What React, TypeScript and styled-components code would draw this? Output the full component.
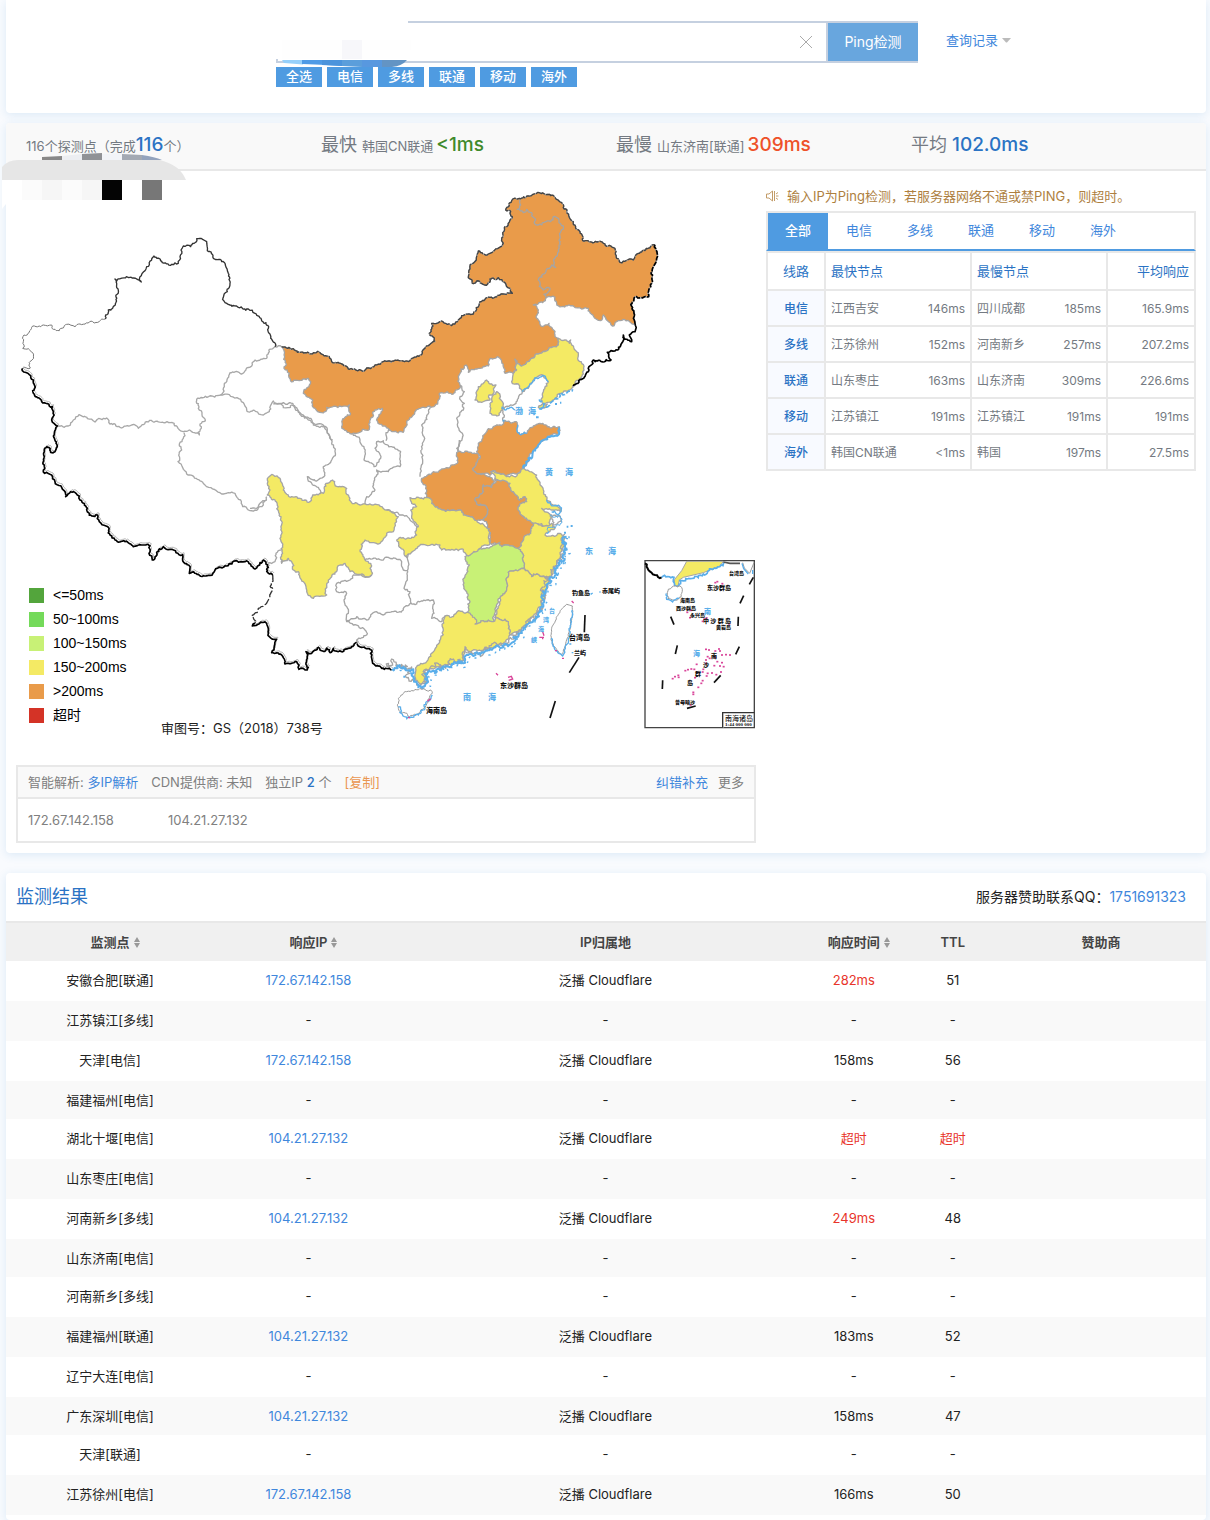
import React from 'react';
import styled, { createGlobalStyle, css } from 'styled-components';

const GlobalStyle = createGlobalStyle`
  * { box-sizing: border-box; }
  body {
    margin: 0;
    background: #f9fbfe;
    color: #222;
    font-family: Inter, "Noto Sans CJK SC", sans-serif;
    font-size: 13px;
    line-height: 20px;
  }
  a { color: #3f87dc; text-decoration: none; }
  button, input { font: inherit; }
  ul, h2, p { margin: 0; padding: 0; list-style: none; }
`;

const colors = {
  blue: '#4f9be1',
  deepBlue: '#2b73c4',
  line: '#e8e8e8',
  grey: '#747a82',
  red: '#e8342a',
};

/* ---------- layout ---------- */

const Page = styled.main`
  padding: 0 4px 0 6px;
  overflow: hidden;
`;

const Panel = styled.section<{ $gap?: number }>`
  position: relative;
  margin-top: ${(p) => p.$gap ?? 0}px;
  background: #fff;
  border-radius: 4px;
  box-shadow: 0 2px 10px rgba(40, 130, 200, 0.14);
`;

/* ---------- search ---------- */

const SearchPanel = styled(Panel)`
  padding: 21px 0 26px 270px;
  border-radius: 0 0 4px 4px;
`;

const SearchRow = styled.form`
  display: flex;
  align-items: center;
  gap: 28px;
`;

const SearchBox = styled.div`
  display: flex;
  width: 642px;
  height: 42px;
  border: solid #c5d0e0;
  border-width: 2px 0 2px 2px;
`;

const AddressInput = styled.input`
  flex: 1;
  min-width: 0;
  padding: 0 10px;
  border: 0;
  outline: 0;
  background: #fff;
`;

const ClearButton = styled.button`
  width: 40px;
  padding: 0;
  border: 0;
  background: #fff;
  svg { display: block; margin: 0 auto; }
`;

const PingButton = styled.button`
  width: 92px;
  padding: 0;
  border: 0;
  border-left: 2px solid #c5d0e0;
  background: #68a6de;
  color: #fff;
  font-size: 14px;
`;

const HistoryLink = styled.a`
  display: flex;
  align-items: center;
  gap: 4px;
  padding-bottom: 4px;
`;

const LineButtons = styled.div`
  display: flex;
  gap: 5px;
  margin-top: 4px;
`;

const LineButton = styled.button`
  width: 46px;
  height: 20px;
  padding: 0 0 2px;
  border: 0;
  background: ${colors.blue};
  color: #fff;
  font-weight: 500;
  line-height: 18px;
`;

const SearchSmudge = styled.svg`
  position: absolute;
  left: 264px;
  top: 16px;
  pointer-events: none;
`;

/* ---------- statistics ---------- */

const StatBar = styled.div`
  display: flex;
  height: 48px;
  padding-left: 20px;
  border-bottom: 2px solid ${colors.line};
  border-radius: 4px 4px 0 0;
  background: #f9f9f9;
  color: ${colors.grey};
`;

const Stat = styled.div`
  flex: 0 1 295px;
  white-space: nowrap;
  line-height: 44px;
`;

const StatLabel = styled.span`
  margin-right: 5px;
  font-size: 18px;
`;

const StatValue = styled.strong<{ $color: string; $gap?: number }>`
  margin-left: ${(p) => p.$gap ?? 0}px;
  color: ${(p) => p.$color};
  font-size: 19px;
  font-weight: 500;
`;

const StatSmudge = styled.svg`
  position: absolute;
  left: -4px;
  top: 30px;
  pointer-events: none;
`;

/* ---------- map column ---------- */

const Columns = styled.div`
  display: flex;
  align-items: flex-start;
  gap: 10px;
  padding: 0 10px 10px;
`;

const MapColumn = styled.div`
  flex: 1;
  min-width: 0;
`;

const MapArea = styled.div`
  position: relative;
`;

const MapDrawing = styled.svg`
  display: block;
  width: 100%;
  height: auto;
  font-family: "Noto Sans CJK SC", sans-serif;
`;

const Legend = styled.ul`
  position: absolute;
  left: 13px;
  bottom: 38px;
  color: #000;
  font-family: "Liberation Sans", "Noto Sans CJK SC", sans-serif;
  font-size: 14px;
  line-height: 24px;
`;

const LegendItem = styled.li<{ $color: string }>`
  display: flex;
  align-items: center;
  gap: 9px;
  height: 24px;
  &::before {
    content: '';
    width: 15px;
    height: 15px;
    background: ${(p) => p.$color};
  }
`;

const MapNote = styled.p`
  position: absolute;
  left: 145px;
  bottom: 27px;
`;

const ResolveBox = styled.div`
  border: 2px solid ${colors.line};
  color: #808080;
`;

const ResolveHead = styled.div`
  display: flex;
  height: 32px;
  padding: 0 10px;
  border-bottom: 2px solid ${colors.line};
  background: #f9f9f9;
  line-height: 30px;
  white-space: nowrap;
`;

const ResolveItem = styled.span`
  margin-right: 13px;
`;

const Count = styled.b`
  color: ${colors.deepBlue};
  font-weight: 500;
`;

const CopyLink = styled.a`
  color: #ea9650;
`;

const ResolveTools = styled.span`
  display: flex;
  gap: 10px;
  margin-left: auto;
`;

const AddressList = styled.ul`
  display: flex;
  padding: 0 10px;
  line-height: 42px;
  li { width: 140px; }
`;

/* ---------- summary column ---------- */

const SummaryColumn = styled.aside`
  flex: 0 0 430px;
  padding-top: 15px;
`;

const Notice = styled.p`
  display: flex;
  align-items: center;
  gap: 8px;
  height: 20px;
  margin-bottom: 5px;
  color: #ae7f3f;
`;

const Tabs = styled.div`
  display: flex;
  gap: 1px;
  height: 40px;
  border: solid ${colors.line};
  border-width: 2px 2px 0;
  border-bottom: 2px solid ${colors.blue};
`;

const Tab = styled.button<{ $active?: boolean }>`
  width: 60px;
  padding: 0 0 2px;
  border: 0;
  background: none;
  color: #3f87dc;
  ${(p) => p.$active && css`
    background: ${colors.blue};
    color: #fff;
    font-weight: 500;
  `}
`;

const SummaryTable = styled.table`
  width: 100%;
  table-layout: fixed;
  border-collapse: collapse;
  color: ${colors.grey};
  font-size: 12px;
  th, td {
    height: 36px;
    padding: 2px 5px 0;
    border: 2px solid ${colors.line};
    text-align: left;
    font-weight: 400;
  }
  th { color: ${colors.deepBlue}; }
  thead th { height: 38px; padding-top: 0; font-size: 13px; }
  th:first-child { text-align: center; }
  tbody th { background: #f8faff; font-weight: 500; }
  th:last-child, td:last-child { text-align: right; }
`;

const NodeCell = styled.div`
  display: flex;
  justify-content: space-between;
`;

/* ---------- result table ---------- */

const ResultHead = styled.header`
  display: flex;
  align-items: center;
  justify-content: space-between;
  height: 50px;
  padding: 0 20px 0 10px;
  border-bottom: 2px solid ${colors.line};
  font-size: 14px;
`;

const ResultTitle = styled.h2`
  color: ${colors.deepBlue};
  font-size: 18px;
  font-weight: 400;
`;

const ResultTable = styled.table`
  width: 100%;
  table-layout: fixed;
  border-spacing: 0;
  text-align: center;
  th, td { height: 40px; padding: 0; }
  td { padding-bottom: 2px; }
  thead th {
    height: 38px;
    background: #f0f0f0;
    color: #444;
    font-weight: 600;
  }
  tbody tr:nth-child(even) { background: #f9f9f9; }
  tbody tr:nth-child(4n) td { height: 38px; padding-bottom: 0; }
  th:first-child, td:first-child { padding-left: 10px; }
  th:last-child, td:last-child { padding-right: 0; }
`;

const ResultPanel = styled(Panel)`
  padding-bottom: 5px;
`;

const Value = styled.span<{ $bad?: boolean }>`
  color: ${(p) => (p.$bad ? colors.red : 'inherit')};
`;

const SortMark = styled.svg`
  margin: 0 -10px -1px 4px;
`;

/* ---------- map geometry ---------- */

type Point = [number, number];

const parse = (s: string): Point[] =>
  s.trim().split(/\s+/).map((p) => p.split(',').map(Number) as Point);

// Splits an edge into a crooked line; both directions of one edge give the same line.
function crooked(a: Point, b: Point, rough: number): Point[] {
  const dx = b[0] - a[0];
  const dy = b[1] - a[1];
  const len = Math.hypot(dx, dy);
  if (len < 7) return [b];
  const swap = a[0] > b[0] || (a[0] === b[0] && a[1] > b[1]);
  const seed = Math.sin((a[0] + b[0]) * 12.9898 + (a[1] + b[1]) * 78.233) * 43758.5453;
  const k = (seed - Math.floor(seed) - 0.5) * rough * Math.min(1, 14 / len) * (swap ? -1 : 1);
  const m: Point = [(a[0] + b[0]) / 2 - dy * k, (a[1] + b[1]) / 2 + dx * k];
  return [...crooked(a, m, rough), ...crooked(m, b, rough)];
}

function outline(s: string, close = false, rough = 0.6) {
  const pts = parse(s);
  if (close) pts.push(pts[0]);
  const out: Point[] = [pts[0]];
  for (let i = 1; i < pts.length; i += 1) out.push(...crooked(pts[i - 1], pts[i], rough));
  return `M${out.map((p) => `${p[0].toFixed(1)},${p[1].toFixed(1)}`).join('L')}${close ? 'Z' : ''}`;
}

const ORANGE = '#e99b4a';
const YELLOW = '#f4ea64';
const GREEN = '#c8f176';
const SEA = '#5aaeea';

const xinjiangBorder =
  '825,380 812,355 806,320 798,308 785,303 765,280 745,267 715,262 690,255 672,243 670,232 682,215 690,190 685,160 676,135 665,125 640,115 622,92 620,65 608,58 590,56 582,70 572,80 550,78 543,90 535,130 515,133 485,124 462,108 440,140 420,170 424,186 412,178 400,174 345,177 350,190 346,255 325,270 316,297';
const westBorderThin =
  '316,297 240,312 225,320 200,313 178,332 160,328 155,315 130,315 95,322 88,337 72,345 70,365 68,385 85,386 97,397 96,420 90,445 68,445';
const southwestBorder =
  '68,445 67,452 88,464 100,480 104,497 98,512 104,527 125,545 157,560 155,600 172,618 163,640 168,670 165,695 152,697 148,683 134,685 131,705 133,740 134,760 155,765 165,785 195,815 197,830 212,815 228,820 240,840 262,865 275,888 293,885 298,905 318,918 330,945 345,960 375,965 400,980 450,977 447,1000 457,1020 470,998 490,980 510,988 548,1004 552,1028 566,1035 568,1060 630,1066 645,1050 680,1038 710,1022 735,1025 765,1047 780,1028 790,1020 803,1035 805,1060 818,1065';
const yunnanThin = '818,1065 816,1110 805,1140 775,1165 755,1188 765,1210';
const yunnanBorder =
  '765,1210 757,1218 800,1210 808,1250 830,1258 815,1298 845,1305 855,1332 890,1325 897,1348 922,1350 918,1295 935,1300 955,1282 970,1294 980,1284 990,1298 1000,1285 1015,1295 1045,1285 1070,1268 1085,1282 1115,1290 1118,1330 1145,1345 1175,1350';

const westLines = [
  '172,618 205,618 220,600 237,584 262,596 285,606 320,594 330,612 360,622 395,615 415,625 440,605 510,608 550,635 568,630 598,645 600,612 616,603 595,565 590,538 662,525 690,458 720,460 765,420 800,415 808,388 825,380 845,381',
  '662,525 688,524 730,548 740,570 790,585 808,575 820,543 850,563 875,555 900,578 940,615 980,622 998,660',
  '552,638 550,655 538,672 545,690 534,725 560,762 620,800 665,822 705,820 722,840 728,860 745,870 765,870 780,860 790,855 800,830',
  '803,1030 825,1025 828,1000 845,990',
];

const northFill =
  '65,500 120,517 180,518 208,530 215,545 245,552 268,568 308,574 345,555 385,543 450,542 480,525 495,505 525,485 508,460 515,430 540,425 575,437 605,407 640,402 660,365 690,352 720,345 757,340 750,325 715,293 690,297 683,312 650,303 640,311 625,293 655,213 685,222 722,200 735,140 757,110 752,95 737,90 755,62 778,55 830,40 885,52 905,68 920,95 940,125 968,182 1030,190 1060,203 1070,235 1080,247 1120,240 1135,220 1185,195 1190,235 1180,260 1175,310 1166,350 1130,350 1112,372 1122,400 1125,430 1090,418 1070,425 1057,438 1030,405 1022,422 1000,408 985,385 965,387 940,378 905,380 890,370 885,352 860,352 848,368 820,375 835,390 835,420 848,440 867,430 885,465 895,475 895,495 840,520 810,540 785,558 765,538 770,570 760,580 735,580 725,545 712,530 688,540 685,558 655,565 625,577 618,555 603,567 595,590 600,615 585,638 538,640 533,672 500,682 480,685 440,725 430,757 400,755 385,745 353,725 367,685 345,690 332,715 328,748 275,762 245,740 247,720 270,705 268,675 245,680 200,682 200,690 185,698 165,685 158,660 130,640 152,605 145,595 92,603 88,580 72,565 78,550';
const northBorder =
  '65,500 120,517 180,518 208,530 215,545 245,552 268,568 308,574 345,555 385,543 450,542 480,525 495,505 525,485 508,460 515,430 540,425 575,437 605,407 640,402 660,365 690,352 720,345 757,340 750,325 715,293 690,297 683,312 650,303 640,311 625,293 655,213 685,222 722,200 735,140 757,110 752,95 737,90 755,62 778,55 830,40 885,52 905,68 920,95 940,125 968,182 1030,190 1060,203 1070,235 1080,247 1120,240 1135,220 1185,195';
const eastBorder =
  '1185,195 1190,235 1180,260 1175,310 1166,350 1130,350 1112,372';
const jilinBorder =
  '1112,372 1122,400 1125,430 1125,455 1108,465 1115,485 1090,465 1085,490 1065,513 1042,517 1053,540 1025,545 1000,540 985,575 940,618';

const northShapes: [string, string][] = [
  [ORANGE, northFill],
  [YELLOW, '895,475 915,480 928,490 932,480 950,515 953,535 972,570 970,582 935,625 900,640 875,665 850,672 845,655 865,605 850,588 825,595 805,625 787,635 775,612 755,605 760,580 770,570 765,538 785,558 810,540 840,520 895,495'],
  [YELLOW, '680,600 690,612 708,615 700,640 687,645 690,660 665,667 645,660 650,645 655,620'],
  [YELLOW, '700,645 710,635 720,645 718,655 727,665 728,690 718,705 690,700 690,680 697,665'],
  [YELLOW, '835,682 850,672 862,672 850,684'],
];

const northLines = [
  '780,57 782,75 772,88 790,98 800,88 815,98 823,130 835,135 872,125 880,110 910,138 900,170 897,200 885,235 887,262 875,255 855,280 835,300 838,320 850,330 860,322 870,325 865,335 852,343 857,352',
  '600,615 613,635 600,650 613,670 610,690 590,715 593,740 607,760 600,785 595,815',
  '787,635 775,655 768,670 725,685 728,720 735,735',
  '510,682 500,710 485,735 492,770 485,810',
];

const southShapes: [string, string][] = [
  [ORANGE, '680,155 685,130 710,95 730,80 760,72 765,62 795,65 803,75 803,98 830,100 850,78 870,70 900,83 928,80 925,102 905,105 885,118 865,135 835,175 822,205 800,222 760,228 730,212 722,225 690,222 668,205 690,175'],
  [ORANGE, '625,155 680,160 690,175 668,205 690,222 722,232 733,245 725,262 700,255 697,280 675,297 685,315 710,320 713,340 700,360 680,362 640,345 630,330 580,330 545,310 530,290 530,270 515,235 550,215 585,205 622,190'],
  [ORANGE, '700,255 725,262 735,235 780,250 790,275 808,300 825,290 830,305 805,320 822,350 850,370 842,400 830,405 805,445 765,435 755,440 720,430 718,395 713,375 700,360 713,340 710,320 685,315 675,297 697,280'],
  [YELLOW, '722,215 770,230 800,228 817,205 860,225 880,270 890,300 930,325 933,335 905,330 875,325 905,345 900,375 850,370 822,350 805,320 830,305 825,290 808,300 790,275 780,250 735,235'],
  [YELLOW, '850,370 895,378 905,370 915,385 885,405 930,400 945,415 940,440 935,470 920,490 905,530 860,522 845,530 820,505 820,470 805,445 830,405 842,400'],
  [GREEN, '645,470 690,445 730,435 750,427 755,440 765,435 805,445 820,470 820,505 775,517 770,545 770,570 750,595 730,650 730,665 700,662 675,672 655,640 660,605 650,575 640,545 650,520 658,495'],
  [YELLOW, '820,505 845,530 860,522 905,530 885,570 880,600 850,650 810,690 780,705 775,665 765,658 735,652 750,595 770,570 770,545 775,517'],
  [YELLOW, '625,632 655,638 680,665 675,672 700,662 730,665 735,652 765,658 775,665 780,705 760,730 700,750 655,755 645,740 640,780 560,800 520,815 525,845 512,855 495,840 500,800 512,790 530,785 560,740 580,690 585,648 610,650'],
  [YELLOW, '480,293 520,297 540,295 545,310 580,330 630,330 640,345 680,362 697,370 718,385 720,430 690,445 655,468 640,448 610,450 575,450 570,435 520,433 495,450 475,462 470,472 440,420 500,405 505,380 485,355 482,330 500,320 485,310'],
  [YELLOW, '70,225 90,235 100,270 125,290 150,295 180,305 188,285 220,280 228,250 248,240 262,260 290,265 298,300 330,315 370,315 410,330 445,350 435,370 430,395 410,400 390,430 365,428 345,420 330,450 345,480 362,490 360,505 365,525 340,530 300,515 290,500 285,490 270,495 260,515 235,540 230,585 190,595 172,580 160,545 145,515 130,510 125,485 115,475 95,490 93,350 75,300 52,285 60,270 52,250 55,232'],
  ['#fff', '900,348 925,345 935,365 910,375'],
];

const southLines = [
  '70,12 100,8 130,15 160,45 190,70 225,80 240,110 245,130 255,155 245,180 220,200 222,230 200,243 172,230 180,245 205,262 210,282',
  '305,100 330,120 345,155 342,180 372,200 380,195 392,175 385,155 375,145 380,125 400,122 452,155 450,200 425,205 415,215 380,210 375,270 350,290 345,312',
  '408,122 408,98 420,88',
  '513,150 518,185 510,230',
  '625,155 620,145 628,120',
  '0,325 20,325 30,310 50,300',
  '410,330 445,340 480,360 505,380',
  '345,480 380,478 400,480 415,472 440,478 455,485 460,510 472,512 475,462',
  '365,525 350,530 310,525 300,540 260,550 260,575 290,580 282,600 295,640 290,665 310,675 345,690 350,705 320,720 318,733',
  '472,512 472,540 462,565 480,575 483,610',
  '290,665 320,650 350,660 380,635 400,645 430,635 460,630 483,610 500,612 530,600 550,600 552,640 545,655 575,665 585,648',
];

const southCoast =
  '425,808 460,800 490,808 492,845 505,862 525,858 525,822 560,808 600,802 640,790 655,765 670,768 700,758 760,742 790,712 820,690 850,660 880,620 882,585 895,550 915,515 925,490 938,470 945,440 950,410';

const inkMarks = ['615,225 613,277', '597,352 568,398', '526,483 510,534'];
const insetMarks = [
  '340,82 328,103', '311,137 300,160', '295,200 294,228', '298,290 287,313', '242,376 222,398',
  '92,200 102,224', '112,286 106,312', '68,391 67,417', '141,475 167,468',
];
const reefs: Point[] = [
  [226, 98], [247, 101], [232, 95], [142, 187], [153, 181], [150, 203], [188, 214], [193, 207], [200, 204], [268, 222],
  [198, 298], [207, 300], [226, 303], [237, 297], [240, 303], [203, 320], [198, 330], [209, 325], [226, 322], [246, 315], [258, 314],
  [270, 315], [232, 335], [246, 338], [251, 350], [240, 348], [223, 347], [198, 340], [170, 343], [190, 358], [144, 359],
  [154, 357], [163, 358], [188, 366], [203, 370], [216, 369], [229, 374], [243, 366], [200, 378], [188, 392], [184, 400],
  [175, 412], [165, 383], [160, 427], [160, 433], [98, 386], [105, 380], [115, 376], [116, 382], [136, 362], [152, 465],
];

const Labels: React.FC<{ items: [number, number, string][]; size: number; color: string }> = ({ items, size, color }) => (
  <g fill={color} fontSize={size} fontWeight={800}>
    {items.map(([x, y, t]) => <text key={`${x}-${y}`} x={x} y={y}>{t}</text>)}
  </g>
);

const ChinaMap: React.FC = () => (
  <MapDrawing viewBox="16 171 740 594" role="img" aria-label="Ping">
    <g transform="translate(0 220) scale(0.33333)" fill="none" strokeLinejoin="round">
      {westLines.map((d) => <path key={d} d={outline(d)} stroke="#a8a8a8" strokeWidth="4" />)}
      <path d={outline(westBorderThin)} stroke="#777" strokeWidth="3" />
      <path d={outline(yunnanThin)} stroke="#333" strokeWidth="4" strokeDasharray="22 6" />
      <path d={outline(xinjiangBorder)} stroke="#333" strokeWidth="4" />
      <g transform="translate(4 -6)" stroke="#b5b5b5" strokeWidth="3">
        <path d={outline(southwestBorder)} />
        <path d={outline(yunnanBorder)} />
      </g>
      <path d={outline(southwestBorder)} stroke="#000" strokeWidth="5" />
      <path d={outline(yunnanBorder)} stroke="#000" strokeWidth="5" />
    </g>
    <g transform="translate(260 180) scale(0.33333)" fill="none" strokeLinejoin="round">
      {northShapes.map(([fill, d]) => <path key={d} d={outline(d, true)} fill={fill} stroke="#a5a5a5" strokeWidth="4" />)}
      {northLines.map((d) => <path key={d} d={outline(d)} stroke="#a5a5a5" strokeWidth="4" />)}
      <path d={outline(northBorder)} stroke="#444" strokeWidth="4" strokeDasharray="30 3" />
      <path d={outline(eastBorder)} stroke="#000" strokeWidth="5" strokeDasharray="14 4" />
      <path d={outline(jilinBorder)} stroke="#000" strokeWidth="5" />
      <path d={outline('787,635 805,620 825,593 850,586 865,605', false)} stroke={SEA} strokeWidth="4" />
      <path d={outline('725,680 735,690 750,683 765,690')} stroke={SEA} strokeWidth="4" />
      <path d={outline('838,658 850,668 838,690 870,670 905,640 938,628', false, 0.9)} stroke={SEA} strokeWidth="5" strokeDasharray="14 5" />
      <path d="M885,672h6M900,668h4M828,712h8M728,722h8" stroke={SEA} strokeWidth="6" />
    </g>
    <g transform="translate(250 400) scale(0.33333)" fill="none" strokeLinejoin="round">
      {southShapes.map(([fill, d]) => <path key={d} d={outline(d, true)} fill={fill} stroke="#a5a5a5" strokeWidth="4" />)}
      {southLines.map((d) => <path key={d} d={outline(d)} stroke="#a5a5a5" strokeWidth="4" />)}
      <path d={outline(southCoast, false, 1.5)} stroke="#a5a5a5" strokeWidth="4" transform="translate(-5 -7)" />
      <path d={outline(southCoast, false, 1.2)} stroke={SEA} strokeWidth="6" />
      <path d={outline(southCoast, false, 1.4)} stroke={SEA} strokeWidth="4" strokeDasharray="6 20" transform="translate(5 6)" />
      <path d={outline('803,75 803,98 830,100', false)} stroke={SEA} strokeWidth="4" />
      <path d={outline('822,205 835,175 865,135 885,118 905,108 927,103 928,82', false, 0.9)} stroke={SEA} strokeWidth="6" />
      <path d={outline('890,300 920,318 933,330 930,338 905,335', false, 0.9)} stroke={SEA} strokeWidth="4" />
      <path d={outline('900,345 930,348 936,368 900,382 890,400', false, 0.9)} stroke={SEA} strokeWidth="3" />
      <path d="M950,380h5M962,378h6M942,398h6M955,412h4M938,490h5M920,525h5M460,830h6" stroke={SEA} strokeWidth="6" />
    </g>
    <g transform="translate(380 540) scale(0.33333)" fill="none">
      <path d={outline('55,475 80,455 120,445 150,450 155,462 130,505 110,525 88,530 60,515 55,505', true)} fill="#fff" stroke="#999" strokeWidth="3" />
      <path d={outline('55,500 60,518 90,533 115,525 135,505 157,465', false, 0.8)} stroke={SEA} strokeWidth="4" />
      <path d={outline('515,265 540,215 560,193 577,198 575,240 565,290 550,330 545,345 520,320 513,300', true, 0.3)} fill="#fff" stroke="#999" strokeWidth="3" />
      <path d={outline('513,295 523,325 548,348 556,325 570,280 577,210', false, 0.5)} stroke={SEA} strokeWidth="4" />
      <path d="M575,183l6,6M478,292h14M488,275l4,12M488,290v8M525,332h6M546,355h6M348,400l6,6M384,412l10-3l4,8l-12,4M84,533h6M142,484l10,-8" stroke="#d9459a" strokeWidth="4" />
      <path d="M632,163l6-4M658,156h4M575,338h5M568,312h6" stroke={SEA} strokeWidth="4" />
      {inkMarks.map((d) => <path key={d} d={`M${d}`} stroke="#111" strokeWidth="5" />)}
    </g>
    <Labels color={SEA} size={8} items={[
      [515, 414, '渤'], [528, 414, '海'], [545, 475, '黄'], [565, 475, '海'], [585, 554, '东'], [608, 554, '海'],
      [463, 700, '南'], [488, 700, '海'],
    ]} />
    <Labels color={SEA} size={6} items={[[549, 613, '台'], [543, 622, '湾'], [538, 631, '海'], [531, 642, '峡']]} />
    <Labels color="#111" size={7} items={[[569, 640, '台湾岛'], [500, 688, '东沙群岛'], [426, 713, '海南岛']]} />
    <Labels color="#111" size={6} items={[[572, 595, '钓鱼岛'], [602, 593, '赤尾屿'], [574, 655, '兰屿']]} />

    <g transform="translate(640 550) scale(0.33333)" fill="none">
      <path d="M15,32V533H343V32z" stroke="#444" strokeWidth="4" fill="#fff" />
      <path d="M140,34H250L240,48L190,68L130,82L118,90L114,108L103,106L104,88L125,62z" fill={YELLOW} stroke="#a5a5a5" strokeWidth="3" />
      <path d={outline('15,40 25,60 45,75 65,82', false)} stroke="#000" strokeWidth="6" />
      <path d={outline('65,82 102,82 104,106 116,108 120,92 190,72 240,50 252,38', false, 0.8)} stroke={SEA} strokeWidth="5" />
      <path d="M250,36l20,4H300" stroke="#555" strokeWidth="5" />
      <path d={outline('82,128 95,112 120,108 127,118 118,142 100,152 84,146', true)} fill="#fff" stroke="#999" strokeWidth="3" />
      <path d={outline('79,130 80,148 98,156 118,145', false)} stroke={SEA} strokeWidth="4" />
      <path d="M308,38l5,16l16,16l13,-32" stroke="#999" strokeWidth="3" />
      <path d="M306,40l5,16l14,16M338,60v12" stroke={SEA} strokeWidth="4" />
      {insetMarks.map((d) => <path key={d} d={`M${d}`} stroke="#111" strokeWidth="5" />)}
      {reefs.map(([x, y]) => <path key={`${x}-${y}`} d={`M${x - 3},${y}h6`} stroke="#d9459a" strokeWidth="5" />)}
      <path d="M248,533V488H343" stroke="#333" strokeWidth="4" fill="#fff" />
    </g>
    <Labels color={SEA} size={7} items={[[704, 614, '南'], [693, 656, '海']]} />
    <Labels color="#111" size={5} items={[
      [729, 575, '台湾岛'], [680, 602, '海南岛'], [676, 610, '西沙群岛'], [690, 617, '永兴岛'], [716, 629, '黄岩岛'], [675, 704, '曾母暗沙'],
    ]} />
    <Labels color="#111" size={6} items={[
      [707, 590, '东沙群岛'], [703, 623, '中 沙 群 岛'], [711, 658, '南'], [703, 667, '沙'], [695, 676, '群'], [687, 685, '岛'],
    ]} />
    <g fill="#111">
      <text x="725" y="721" fontSize="7" fontWeight="500">南海诸岛</text>
      <text x="725" y="726" fontSize="5" fontWeight="700" fontFamily="Liberation Serif, serif">1:44 000 000</text>
    </g>
  </MapDrawing>
);

/* ---------- data ---------- */

const lines = ['电信', '多线', '联通', '移动', '海外'];

const legend: [string, string][] = [
  ['#53a53c', '<=50ms'], ['#74da5a', '50~100ms'], [GREEN, '100~150ms'],
  [YELLOW, '150~200ms'], [ORANGE, '>200ms'], ['#d43326', '超时'],
];

const summary = [
  ['电信', '江西吉安', '146ms', '四川成都', '185ms', '165.9ms'],
  ['多线', '江苏徐州', '152ms', '河南新乡', '257ms', '207.2ms'],
  ['联通', '山东枣庄', '163ms', '山东济南', '309ms', '226.6ms'],
  ['移动', '江苏镇江', '191ms', '江苏镇江', '191ms', '191ms'],
  ['海外', '韩国CN联通', '<1ms', '韩国', '197ms', '27.5ms'],
];

interface Result { node: string; ip?: string; time?: string; ttl?: string }

const A = '172.67.142.158';
const B = '104.21.27.132';
const results: Result[] = [
  { node: '安徽合肥[联通]', ip: A, time: '282ms', ttl: '51' },
  { node: '江苏镇江[多线]' },
  { node: '天津[电信]', ip: A, time: '158ms', ttl: '56' },
  { node: '福建福州[电信]' },
  { node: '湖北十堰[电信]', ip: B, time: '超时', ttl: '超时' },
  { node: '山东枣庄[电信]' },
  { node: '河南新乡[多线]', ip: B, time: '249ms', ttl: '48' },
  { node: '山东济南[电信]' },
  { node: '河南新乡[多线]' },
  { node: '福建福州[联通]', ip: B, time: '183ms', ttl: '52' },
  { node: '辽宁大连[电信]' },
  { node: '广东深圳[电信]', ip: B, time: '158ms', ttl: '47' },
  { node: '天津[联通]' },
  { node: '江苏徐州[电信]', ip: A, time: '166ms', ttl: '50' },
];

const isSlow = (v?: string) => v === '超时' || (!!v && v.endsWith('ms') && parseInt(v, 10) > 200);

const Sort: React.FC = () => (
  <SortMark width="6" height="11" viewBox="0 0 6 11" fill="#999" aria-hidden="true">
    <path d="M3 0L6 5H0zM3 11L0 6H6z" />
  </SortMark>
);

/* ---------- page ---------- */

export default function App() {
  return (
    <Page>
      <GlobalStyle />
      <SearchPanel>
        <SearchRow onSubmit={(e) => e.preventDefault()}>
          <SearchBox>
            <AddressInput type="text" aria-label="IP" />
            <ClearButton type="button" aria-label="×">
              <svg width="12" height="12" viewBox="0 0 12 12" stroke="#aaa" strokeWidth="1">
                <path d="M0 0L12 12M12 0L0 12" />
              </svg>
            </ClearButton>
            <PingButton type="submit">Ping检测</PingButton>
          </SearchBox>
          <HistoryLink href="#history">
            查询记录
            <svg width="9" height="5" viewBox="0 0 9 5" fill="#bbb"><path d="M0 0H9L5 4.500H4z" /></svg>
          </HistoryLink>
        </SearchRow>
        <SearchSmudge width="146" height="51" viewBox="270 16 146 51">
          <path d="M270 18H408V24Q414 40 412 59H276V62H270z" fill="#fff" />
          <path d="M282 40H342V59H282zM362 40H411L410 59H362z" fill="#fefefe" />
          <path d="M342 40H362V59H342z" fill="#f7f7fa" />
          <path d="M276 61H282L280 63H276z" fill="#c5d0e0" />
          <path d="M282 60H303V64.500L284 63z" fill="#97d0fa" />
          <path d="M302 60H342V66Q330 65 302 64z" fill="#4f9be6" />
          <path d="M322 60H342V66L322 65z" fill="#4c94dc" />
          <path d="M342 60H362V67L342 66z" fill="#5b9edb" />
          <path d="M362 60H382V67H362z" fill="#5898df" />
          <path d="M382 60H407Q402 66 392 67H382z" fill="#6394c4" />
        </SearchSmudge>
        <LineButtons>
          {['全选', ...lines].map((t) => <LineButton key={t} type="button">{t}</LineButton>)}
        </LineButtons>
      </SearchPanel>

      <Panel $gap={10}>
        <StatBar>
          <Stat>116个探测点（完成<StatValue $color={colors.deepBlue}>116</StatValue>个）</Stat>
          <Stat><StatLabel>最快</StatLabel>韩国CN联通<StatValue $color="#3f8a2b" $gap={3}>&lt;1ms</StatValue></Stat>
          <Stat><StatLabel>最慢</StatLabel>山东济南[联通]<StatValue $color="#ee5128" $gap={3}>309ms</StatValue></Stat>
          <Stat><StatLabel>平均</StatLabel><StatValue $color={colors.deepBlue}>102.0ms</StatValue></Stat>
        </StatBar>
        <StatSmudge width="186" height="56" viewBox="2 153 186 56">
          <path d="M2 180H182V204H6L2 209z" fill="#fff" />
          <path d="M2 180V167Q8 160 18 160H160Q180 165 186 180z" fill="#e6e6e6" />
          <path d="M42 157L62 156V160H42z" fill="#888" />
          <path d="M62 156L82 154V160H62z" fill="#eceef2" />
          <path d="M82 154L102 153V160H82z" fill="#909296" />
          <path d="M102 154L122 153V160H102z" fill="#f2f4f8" />
          <path d="M122 154L142 155V160H122z" fill="#a3a9b3" />
          <path d="M142 155Q155 157 162 160H142z" fill="#93a3bd" />
          <path d="M22 180H42V200H22zM62 180H82V200H62z" fill="#fbfbfb" />
          <path d="M42 180H62V200H42zM82 180H102V200H82z" fill="#f6f6f6" />
          <path d="M102 180H122V200H102z" fill="#040404" />
          <path d="M142 180H162V200H142z" fill="#777" />
        </StatSmudge>
        <Columns>
          <MapColumn>
            <MapArea>
              <ChinaMap />
              <Legend>
                {legend.map(([color, text]) => <LegendItem key={text} $color={color}>{text}</LegendItem>)}
              </Legend>
              <MapNote>审图号：GS（2018）738号</MapNote>
            </MapArea>
            <ResolveBox>
              <ResolveHead>
                <ResolveItem>智能解析: <a href="#multi">多IP解析</a></ResolveItem>
                <ResolveItem>CDN提供商: 未知</ResolveItem>
                <ResolveItem>独立IP <Count>2</Count> 个</ResolveItem>
                <CopyLink href="#copy">[复制]</CopyLink>
                <ResolveTools><a href="#fix">纠错补充</a><span>更多</span></ResolveTools>
              </ResolveHead>
              <AddressList><li>{A}</li><li>{B}</li></AddressList>
            </ResolveBox>
          </MapColumn>

          <SummaryColumn>
            <Notice>
              <svg width="13" height="12" viewBox="0 0 13 12" fill="none" stroke="#c39c68">
                <path d="M.5 4H3L6.500 1V11L3 8H.5zM8.500 1V11M10 4L12 2.500M10 6H12.500M10 8L12 9.500" />
              </svg>
              输入IP为Ping检测，若服务器网络不通或禁PING，则超时。
            </Notice>
            <Tabs>
              {['全部', ...lines].map((t, i) => <Tab key={t} type="button" $active={i === 0}>{t}</Tab>)}
            </Tabs>
            <SummaryTable>
              <colgroup>
                <col style={{ width: 58 }} /><col style={{ width: 146 }} /><col style={{ width: 136 }} /><col />
              </colgroup>
              <thead>
                <tr><th>线路</th><th>最快节点</th><th>最慢节点</th><th>平均响应</th></tr>
              </thead>
              <tbody>
                {summary.map(([line, fast, fastMs, slow, slowMs, avg]) => (
                  <tr key={line}>
                    <th>{line}</th>
                    <td><NodeCell><span>{fast}</span><span>{fastMs}</span></NodeCell></td>
                    <td><NodeCell><span>{slow}</span><span>{slowMs}</span></NodeCell></td>
                    <td>{avg}</td>
                  </tr>
                ))}
              </tbody>
            </SummaryTable>
          </SummaryColumn>
        </Columns>
      </Panel>

      <ResultPanel $gap={20}>
        <ResultHead>
          <ResultTitle>监测结果</ResultTitle>
          <span>服务器赞助联系QQ：<a href="#qq">1751691323</a></span>
        </ResultHead>
        <ResultTable>
          <colgroup>
            <col style={{ width: '16.5%' }} /><col style={{ width: '17.4%' }} /><col style={{ width: '32.1%' }} />
            <col style={{ width: '9.3%' }} /><col style={{ width: '7.2%' }} /><col style={{ width: '17.5%' }} />
          </colgroup>
          <thead>
            <tr>
              <th>监测点<Sort /></th><th>响应IP<Sort /></th><th>IP归属地</th><th>响应时间<Sort /></th><th>TTL</th><th>赞助商</th>
            </tr>
          </thead>
          <tbody>
            {results.map((r, i) => (
              <tr key={`${r.node}-${i}`}>
                <td>{r.node}</td>
                <td>{r.ip ? <a href={`#${r.ip}`}>{r.ip}</a> : '-'}</td>
                <td>{r.ip ? '泛播 Cloudflare' : '-'}</td>
                <td><Value $bad={isSlow(r.time)}>{r.time ?? '-'}</Value></td>
                <td><Value $bad={isSlow(r.ttl)}>{r.ttl ?? '-'}</Value></td>
                <td />
              </tr>
            ))}
          </tbody>
        </ResultTable>
      </ResultPanel>
    </Page>
  );
}
